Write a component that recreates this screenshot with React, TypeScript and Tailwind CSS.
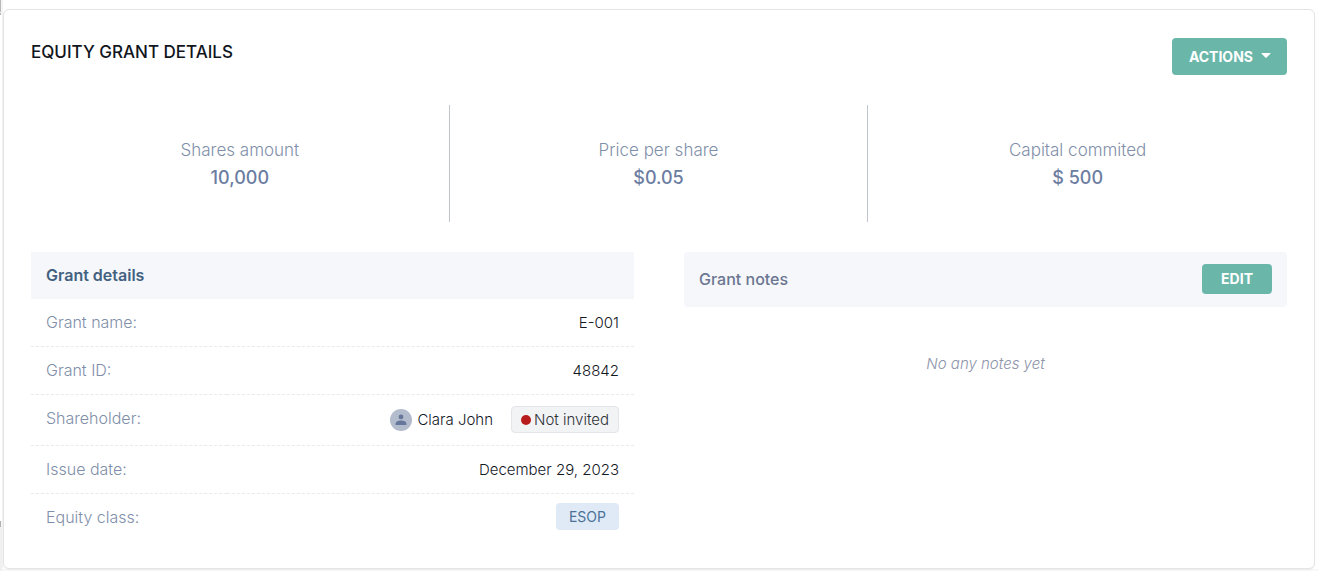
import type { ReactNode } from "react";

const stats = [
  { label: "Shares amount", value: "10,000" },
  { label: "Price per share", value: "$0.05" },
  { label: "Capital commited", value: "$ 500" },
];

function Row({ label, children }: { label: string; children: ReactNode }) {
  return (
    <tr className="group align-top">
      <th
        scope="row"
        className="h-12 border-b border-dashed border-[#e8eaee] px-[15px] pt-[11px] text-left text-base leading-6 font-light text-[#7f8fa9] group-last:border-b-0"
      >
        {label}
      </th>
      <td className="border-b border-dashed border-[#e8eaee] px-[15px] text-right leading-[47px] font-light text-[#14181f] group-last:border-b-0">
        {children}
      </td>
    </tr>
  );
}

function Avatar() {
  return (
    <svg viewBox="0 0 22 22" className="size-[22px]" aria-hidden="true">
      <circle cx="11" cy="11" r="11" fill="#b3bccc" />
      <circle cx="11" cy="7.9" r="2.4" fill="#66779b" />
      <path d="M5.6 16v-1.2c0-2 2.6-3.2 5.4-3.2s5.4 1.2 5.4 3.2V16z" fill="#66779b" />
    </svg>
  );
}

function PanelEdge() {
  return (
    <div className="flex w-[3px] shrink-0 flex-col items-start bg-[#f4f4f4]" aria-hidden="true">
      <div className="h-3 w-px bg-[#b8b8b8]" />
      <div className="h-px w-px" />
      <div className="h-0.5 w-px bg-[#b8b8b8]" />
      <div className="w-0.5 flex-1 bg-white" />
      <div className="h-1.5 w-px bg-[#b0b0b0]" />
      <div className="h-11 w-0.5 bg-[#f0f0f0]" />
    </div>
  );
}

export default function App() {
  return (
    <div className="flex min-h-screen bg-white font-['Inter','Liberation_Sans',sans-serif] text-[15px]">
      <PanelEdge />
      <div className="flex-1 border-b-2 border-[#f8f8f8] pt-[9px] pr-[3px]">
        <main className="rounded-md border border-[#e4e4e4] bg-white px-[27px] pt-7 pb-[26px] shadow-xs">
          <header className="flex items-start justify-between">
            <h1 className="pt-0.5 text-[17px] leading-6 font-medium text-[#11151c]">EQUITY GRANT DETAILS</h1>
            <button type="button" className="flex h-[37px] items-center gap-2 rounded bg-[#6ab7aa] pr-4 pl-[17px] text-sm font-bold text-white">
              ACTIONS
              <svg viewBox="0 0 10 5" className="mb-0.5 h-[5px] w-2.5" aria-hidden="true">
                <path d="M1 0h8q1 0 .4.7L5.6 4.6q-.6.6-1.2 0L.6.7Q0 0 1 0z" fill="currentColor" />
              </svg>
            </button>
          </header>

          <dl className="mt-[30px] grid grid-cols-3 text-center">
            {stats.map((s) => (
              <div key={s.label} className="border-r border-[#bfc4ce] pt-[31px] pb-[30px] last:border-r-0">
                <dt className="text-[17px] leading-7 font-light text-[#7f8fa9]">{s.label}</dt>
                <dd className="text-lg leading-7 font-medium text-[#6b7da1]">{s.value}</dd>
              </div>
            ))}
          </dl>

          <div className="mt-[30px] grid grid-cols-2 items-start gap-[50px]">
            <section>
              <h2 className="bg-[#f5f7fb] px-[15px] py-3 text-base leading-[23px] font-semibold text-[#43617f]">Grant details</h2>
              <table className="w-full border-separate border-spacing-0">
                <tbody>
                  <Row label="Grant name:">E-001</Row>
                  <Row label="Grant ID:">48842</Row>
                  <Row label="Shareholder:">
                    <span className="flex items-center justify-end pt-[11px] pb-3 leading-6">
                      <Avatar />
                      <span className="mr-[18px] ml-[5px]">Clara John</span>
                      <span className="flex h-[27px] items-center gap-[3px] rounded border border-[#e3e5e8] bg-[#f2f3f5] px-[9px] text-[#2d3138]">
                        <span className="size-2.5 rounded-full bg-[#b91c1c]" />
                        Not invited
                      </span>
                    </span>
                  </Row>
                  <Row label="Issue date:">December 29, 2023</Row>
                  <Row label="Equity class:">
                    <span className="flex justify-end pt-[9px]">
                      <span className="rounded bg-[#dfeaf6] px-[13px] text-sm leading-[27px] font-normal text-[#4a7298]">ESOP</span>
                    </span>
                  </Row>
                </tbody>
              </table>
            </section>

            <section>
              <div className="flex items-center justify-between rounded bg-[#f5f7fb] px-[15px] pt-3 pb-[13px]">
                <h2 className="text-base font-medium text-[#6b7690]">Grant notes</h2>
                <button type="button" className="h-[30px] rounded bg-[#6ab7aa] px-[19px] text-sm font-bold text-white">EDIT</button>
              </div>
              <p className="mt-[45px] text-center leading-6 font-light text-[#8d94aa] italic">No any notes yet</p>
            </section>
          </div>
        </main>
      </div>
    </div>
  );
}
